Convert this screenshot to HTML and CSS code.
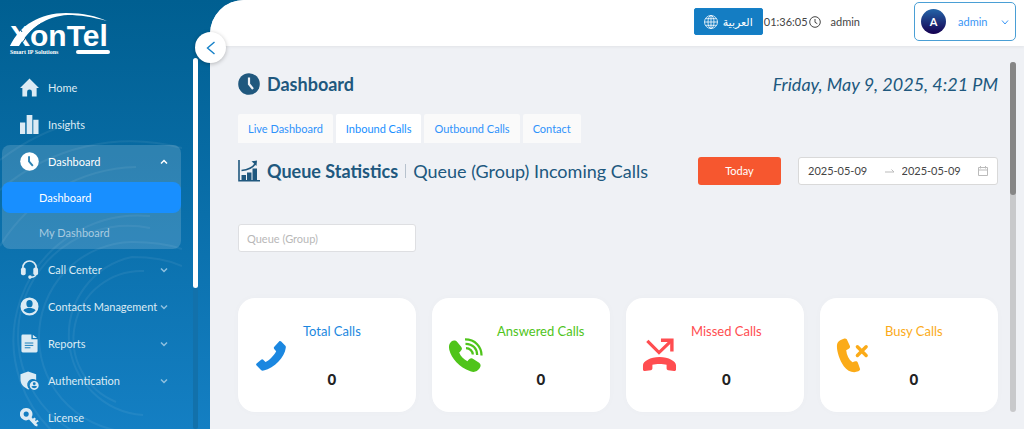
FILE: index.html
```html
<!DOCTYPE html>
<html lang="en">
<head>
<meta charset="utf-8">
<meta name="viewport" content="width=device-width, initial-scale=1">
<title>XonTel Dashboard</title>
<link rel="stylesheet" href="styles.css">
</head>
<body>
<div class="app">
  <aside class="sidebar">
    <svg class="rings" viewBox="0 0 182 429" preserveAspectRatio="xMinYMin slice" aria-hidden="true">
      <g fill="none" stroke="#fff" stroke-width="2">
        <path d="M116 402A68 68 0 0 1 144 271"/>
        <path d="M143 415A80 80 0 0 1 132 257q30 0 50 9"/>
        <path d="M136 432A95 95 0 0 1 132 242q30 0 50 7"/>
        <path d="M90 439A110 110 0 0 1 150 228"/>
        <path d="M70 445A125 125 0 0 1 150 216"/>
        <path d="M0 246A164 164 0 0 1 136 167"/><path d="M0 190A200 200 0 0 1 182 148"/><path d="M0 160A220 220 0 0 1 80 121"/>
      </g>
    </svg>
    <div class="brand">
      <svg width="104" height="46" viewBox="0 0 104 46" role="img" aria-label="XonTel Smart IP Solutions">
        <text class="brand-name" x="2" y="37">XonTel</text>
        <path d="M2 37C12 16 32 4 58 4c18 0 30 3 41 8C84 8 72 6 60 6 38 7 22 19 11 37z" fill="#fff"/>
        <path d="M12.500 37C18 27 25 19 34 14M9 15l5 8" fill="none" stroke="#016094" stroke-width="1"/>
        <text class="brand-tag" x="2" y="45">Smart IP Solutions</text>
        <rect x="68" y="41" width="34" height="4" rx="2" fill="#fff"/>
      </svg>
    </div>
    <nav class="nav">
      <a class="item" href="#"><svg viewBox="0 0 20 20"><path d="M10 0.500 20 10.500H17.500V19.500H12.500V14.500a2.500 2.500 0 0 0-5 0v5H2.500v-9H0z"/></svg><span>Home</span></a>
      <a class="item" href="#"><svg viewBox="0 0 20 20"><path d="M0 8h5.500v12H0zM7 0h6v20H7zM14 5h5.500v15H14z"/></svg><span>Insights</span></a>
      <div class="group">
        <a class="item on" href="#"><svg viewBox="0 0 20 20"><circle cx="10" cy="10" r="9.800"/><path class="cut" d="M9.500 4.500V10l4 4.500"/></svg><span>Dashboard</span><svg class="caret" viewBox="0 0 8 8"><path d="M1 5.500 4 2.500l3 3"/></svg></a>
        <a class="sub active" href="#">Dashboard</a>
        <a class="sub" href="#">My Dashboard</a>
      </div>
      <a class="item" href="#"><svg viewBox="0 0 20 20"><path d="M3 11V8a7 7 0 0 1 14 0v3" fill="none" stroke="currentColor" stroke-width="1.700"/><rect x="1" y="8" width="5" height="8" rx="2"/><rect x="14" y="8" width="5" height="8" rx="2"/><path d="M17 14c0 3-2 4.200-6 4.200" fill="none" stroke="currentColor" stroke-width="1.500"/><circle cx="10.500" cy="18" r="1.900"/></svg><span>Call Center</span><svg class="caret" viewBox="0 0 8 8"><path d="M1 2.500 4 5.500l3-3"/></svg></a>
      <a class="item" href="#"><svg viewBox="0 0 20 20"><path fill-rule="evenodd" d="M10 .5a9.500 9.500 0 1 0 0 19 9.500 9.500 0 0 0 0-19zM10 3.200a3.300 3.800 0 1 1 0 7.600 3.300 3.800 0 0 1 0-7.600zM3.500 14c2-2 4-2.300 6.500-2.300s4.500.3 6.500 2.300c-3.500 4-9.500 4-13 0z"/></svg><span>Contacts Management</span><svg class="caret" viewBox="0 0 8 8"><path d="M1 2.500 4 5.500l3-3"/></svg></a>
      <a class="item" href="#"><svg viewBox="0 0 20 20"><path d="M3 .5h9v5h6.500V18a1.500 1.500 0 0 1-1.500 1.500H3A1.500 1.500 0 0 1 1.500 18V2A1.500 1.500 0 0 1 3 .5zM13.500.8l4.500 3.500h-4.500z"/><path class="line" d="M5 9.500h9M5 12h9M5 14.500h6"/></svg><span>Reports</span><svg class="caret" viewBox="0 0 8 8"><path d="M1 2.500 4 5.500l3-3"/></svg></a>
      <a class="item" href="#"><svg viewBox="0 0 20 20"><path d="M8.500.5 17 3.500v6a5.500 5.500 0 0 0-7 9.500l-1.500.5C3 16.500.5 14 .5 8V3.500z"/><path fill-rule="evenodd" d="M15 10.500a4.700 4.700 0 1 0 0 9.400 4.700 4.700 0 0 0 0-9.400zm0 1.300a1.500 1.500 0 1 1 0 3 1.500 1.500 0 0 1 0-3zm-3 4.600c1.500-1 4.500-1 6 0-1.200 2.200-4.800 2.200-6 0z"/></svg><span>Authentication</span><svg class="caret" viewBox="0 0 8 8"><path d="M1 2.500 4 5.500l3-3"/></svg></a>
      <a class="item" href="#"><svg viewBox="0 0 20 20"><path fill-rule="evenodd" d="M6.500 0a6.500 6.500 0 1 0 3 12.200l6.200 6.600 2.300.7.700-2-1.700-1.500 1.400-1.200 1.500-.5-1.700-2-1.600 1.300-1-.9 1.300-1.200-1.700-1.500-1.700 1.200-1.300-1.400A6.500 6.500 0 0 0 6.500 0zm0 3.700a2.700 2.700 0 1 1 0 5.400 2.700 2.700 0 0 1 0-5.400z"/></svg><span>License</span></a>
    </nav>
    <div class="side-track"><div class="side-thumb"></div></div>
    <button class="collapse" aria-label="Collapse menu"><svg width="10" height="14" viewBox="0 0 10 14"><path d="M8.500 1 1.500 7l7 6"/></svg></button>
  </aside>
  <div class="main">
    <header class="topbar">
      <button class="lang"><svg width="14" height="14" viewBox="0 0 14 14"><circle cx="7" cy="7" r="6.500"/><ellipse cx="7" cy="7" rx="3" ry="6.500"/><path d="M7 .5v13M.5 7h13M1.500 3.700h11M1.500 10.300h11"/></svg><span lang="ar" dir="rtl">العربية</span></button>
      <span class="clock">01:36:05<svg width="12" height="12" viewBox="0 0 12 12"><circle cx="6" cy="6" r="5.300"/><path d="M6 3v3.300l2.300 1.400"/></svg></span>
      <span class="who">admin</span>
      <button class="user"><span class="avatar">A</span><span class="user-name">admin</span><svg width="8" height="8" viewBox="0 0 8 8"><path d="M1 2.500 4 6l3-3.500"/></svg></button>
    </header>
    <div class="body">
      <main class="content">
        <div class="title-row">
          <svg width="22" height="22" viewBox="0 0 22 22"><circle cx="11" cy="11" r="10.800" fill="#20587e"/><path d="M11 4.500V11l4 5" fill="none" stroke="#eff1f5" stroke-width="2.200"/></svg>
          <h1>Dashboard</h1>
          <time>Friday, May 9, 2025, 4:21 PM</time>
        </div>
        <nav class="tabs">
          <a href="#">Live Dashboard</a><a class="current" href="#">Inbound Calls</a><a href="#">Outbound Calls</a><a href="#">Contact</a>
        </nav>
        <div class="stats-row">
          <svg width="22" height="22" viewBox="0 0 22 22"><path d="M1 0v20.800h21M3.500 10.500c6-.5 11-2.500 14-7" fill="none" stroke="#20587e" stroke-width="1.600"/><path d="M13.500 1.300 19 .5l-.5 5.500z" fill="#20587e"/><path d="M3.500 15H8v5H3.500zM9 12.500h4.500V20H9zM14.500 8.500H19V20h-4.500z" fill="#20587e"/></svg>
          <h2>Queue Statistics</h2><i class="bar"></i><span class="subtitle">Queue (Group) Incoming Calls</span>
          <button class="today">Today</button>
          <div class="range">
            <input type="text" aria-label="Start date" value="2025-05-09">
            <svg width="10" height="8" viewBox="0 0 10 8"><path d="M0 5h9L6.500 2.500"/></svg>
            <input type="text" aria-label="End date" value="2025-05-09">
            <svg width="10" height="10" viewBox="0 0 10 10"><path d="M.5 1.500h9v8h-9zM.5 4h9M2.500 0v2.500M7.500 0v2.500"/></svg>
          </div>
        </div>
        <div class="grid filters"><input class="queue" type="text" aria-label="Queue (Group)" placeholder="Queue (Group)"></div>
        <section class="grid cards">
          <article class="card total">
            <svg viewBox="0 0 36 36"><path d="M25.800 3.500c.8-.8 1.500-.6 2.200.1l4 4c.8.8.8 1.400.7 2.500C31.500 20 21 31 10 33.500c-1.300.3-2 .1-2.800-.7l-4.500-4.500c-.7-.7-.7-1.300 0-2l4.600-4c.8-.7 1.500-.7 2.200 0l2.300 2.500C16 22.500 20.500 18 22.800 13.500l-2-2.300c-.6-.8-.6-1.400.1-2.200z"/></svg>
            <div><h3>Total Calls</h3><strong>0</strong></div>
          </article>
          <article class="card answered">
            <svg viewBox="0 0 36 36"><path d="M3.500 3.500c2-1.500 4.500-1.200 6 .5l4 5c1.500 2 1 3.300-2 6 1.500 4 4.500 7 8.500 9 2-3 4-4 6-2.500l6 4c2 1.500 2 3.700.5 5.700-2.500 3.500-5.500 4.500-9.500 3C11.500 30 3.500 21 1.300 12c-.7-3.500-.3-6.500 2.200-8.500z"/><g fill="none" stroke="currentColor" stroke-width="2.300"><path d="M17.500 1.500C28 1.500 34.500 9 34.500 18"/><path d="M18 6c7.500 0 12 5 12 11.500"/><path d="M18.500 10.500c4 0 7 3 7 6.500"/></g></svg>
            <div><h3>Answered Calls</h3><strong>0</strong></div>
          </article>
          <article class="card missed">
            <svg viewBox="0 0 36 36"><path d="M5.500 3 17.500 15 30 3" fill="none" stroke="currentColor" stroke-width="3.300"/><path d="M19.500.5H32.500V14h-3.500V4h-9.500zM1 28c0-4 7.500-8.500 17-8.500S35 24 35 28v4.500c0 1-.8 1.700-2 1.500l-6-.8c-1.200-.2-1.700-1-1.700-2V27.500c-4-1-10.600-1-14.600 0V31c0 1-.5 2-1.700 2.200L3 34c-1.200.2-2-.5-2-1.500z"/></svg>
            <div><h3>Missed Calls</h3><strong>0</strong></div>
          </article>
          <article class="card busy">
            <svg viewBox="0 0 36 36"><path d="M8 .8c2-.7 3 0 3.700 1.700l2.500 5.500c.7 1.700-.2 3-3.700 4.500.5 5 2.500 9.500 6.500 12.500 3-1.500 4.700-1.300 5.500.5l2 5.500c.6 1.700.2 2.500-1.500 3.300-5.500 2.200-11 0-15-5.300C3.500 22.500.5 13 1 7.500 1.300 3.500 4.500 1.800 8 .8z"/><path d="m22 9 9 9m0-9-9 9" fill="none" stroke="currentColor" stroke-width="3.500" stroke-linecap="round"/></svg>
            <div><h3>Busy Calls</h3><strong>0</strong></div>
          </article>
        </section>
      </main>
      <div class="track"><div class="thumb"></div></div>
    </div>
  </div>
</div>
</body>
</html>
```
FILE: styles.css
```css
* { box-sizing: border-box; }
body { margin: 0; font: 11px/16px Lato, "DejaVu Sans", sans-serif; color: #444; }
button, input { font: inherit; color: inherit; margin: 0; }
a { text-decoration: none; color: inherit; }
h1, h2, h3 { margin: 0; }

.app { display: flex; height: 100vh; overflow: hidden; background: linear-gradient(#005f91, #147fc3); }

.sidebar { position: relative; flex: 0 0 210px; padding-right: 28px; }
.rings { position: absolute; top: 0; left: 0; width: 182px; height: 100%; opacity: .06; }
.brand { height: 71px; padding: 9px 0 0 8px; }
.brand svg { display: block; }
.brand-name { font: bold 30px "Liberation Sans", Arial, sans-serif; fill: #fff; }
.brand-tag { font: bold 6px "Liberation Serif", serif; fill: #fff; }
.nav { position: relative; display: flex; flex-direction: column; gap: 4px; color: #dcebf4; }
.item { display: flex; align-items: center; height: 33px; padding: 0 14px 0 20px; }
.item > svg { width: 19px; height: 19px; margin-right: 9px; fill: currentColor; }
.item > .caret { width: 8px; height: 8px; margin: 0 0 0 auto; fill: none; stroke: #8fc0df; stroke-width: 1.5; }
.item.on { color: #fff; }
.item.on > .caret { stroke: #fff; }
.item span { white-space: nowrap; }
.cut { fill: none; stroke: #2d83b4; stroke-width: 2; }
.line { stroke: #1279b8; stroke-width: 1; }
.group { display: flex; flex-direction: column; gap: 4px; margin: 0 1px 0 2px; padding-bottom: 1px; border-radius: 8px; background: rgba(255, 255, 255, .16); }
.group .item { padding: 0 13px 0 18px; }
.sub { height: 31px; line-height: 31px; padding-left: 37px; border-radius: 8px; color: #a9cbe0; }
.sub.active { background: #188fff; color: #fff; }
.side-track { position: absolute; top: 58px; bottom: 0; right: 12px; width: 5px; background: #1271ab; border-radius: 3px; }
.side-thumb { height: 62%; border-radius: 3px; background: #fff; }
.collapse { position: absolute; z-index: 2; top: 32px; right: -16px; width: 31px; height: 31px; padding: 0; border: 0; border-radius: 50%; background: #fff; box-shadow: 0 1px 4px rgba(0, 0, 0, .25); display: grid; place-items: center; }
.collapse path { fill: none; stroke: #1580c8; stroke-width: 1.4; }

.main { flex: 1; min-width: 0; display: flex; flex-direction: column; border-top-left-radius: 34px; overflow: hidden; background: #eff1f5; }
.topbar { flex: none; display: flex; align-items: center; justify-content: flex-end; height: 46px; padding: 0 8px 3px 0; background: #fff; box-shadow: 0 1px 3px rgba(0, 0, 0, .06); }
.lang { display: flex; align-items: center; justify-content: space-between; width: 69px; height: 27px; padding: 0 9px; border: 1px solid #1580c8; border-radius: 2px; background: #147dc3; color: #fff; }
.lang svg { fill: none; stroke: #fff; stroke-width: .8; }
.clock { display: flex; align-items: center; gap: 1px; margin: 0 10px 0 1px; }
.clock svg { fill: none; stroke: #444; stroke-width: 1; }
.who { margin-right: 54px; }
.user { display: flex; align-items: center; width: 102px; height: 39px; padding: 0 6px; border: 1px solid #4a9fd5; border-radius: 5px; background: #fff; color: #3a96f5; }
.user svg { margin-left: auto; fill: none; stroke: #3a96f5; stroke-width: 1; }
.user-name { margin-left: 12px; }
.avatar { width: 25px; height: 25px; border-radius: 50%; background: linear-gradient(#2464a8, #150050); color: #fff; font-weight: bold; line-height: 25px; text-align: center; }

.body { flex: 1; display: flex; padding: 16px 8px 17px 28px; }
.content { flex: 1; min-width: 0; padding-top: 8px; }
.track { flex: 0 0 6px; margin-left: 12px; border-radius: 3px; background: #c8c9cb; }
.thumb { height: 38%; border-radius: 3px; background: #868686; }
.title-row, .stats-row { display: flex; align-items: center; height: 28px; color: #20587e; }
h1, h2 { margin-left: 7px; font-size: 18px; line-height: 28px; white-space: nowrap; }
time { margin-left: auto; font-size: 18px; font-style: italic; white-space: nowrap; }
.tabs { display: flex; gap: 3px; margin: 16px 0 14px; color: #2f92fa; }
.tabs a { padding: 0 10px; line-height: 29px; border-radius: 2px 2px 0 0; background: #fafafa; white-space: nowrap; }
.tabs .current { background: #fff; color: #188fff; }
.bar { width: 1px; height: 14px; margin: 0 7px; background: #b7c2cd; }
.subtitle { font-size: 18px; white-space: nowrap; }
.today { width: 83px; height: 28px; margin: 0 17px 0 auto; padding: 0; border: 0; border-radius: 3px; background: #f6572f; color: #fff; }
.range { display: flex; align-items: center; width: 200px; height: 28px; padding: 0 9px; border: 1px solid #d9d9d9; border-radius: 3px; background: #fff; color: #444; }
.range input { flex: 1; width: 0; min-width: 0; padding: 0; border: 0; background: none; }
.range svg { flex: none; margin-right: 7px; fill: none; stroke: #bbb; stroke-width: 1; }
.range svg:last-child { margin-right: 0; }
.grid { display: grid; grid-template-columns: repeat(4, minmax(0, 1fr)); gap: 16px; }
.filters { margin: 39px 0 46px; }
.queue { width: 100%; height: 28px; padding: 0 8px; border: 1px solid #dedfe2; border-radius: 3px; background: #fff; }
.queue::placeholder { color: #b8b8b8; opacity: 1; }
.card { display: flex; gap: 14px; padding: 23px 16px; border-radius: 17px; background: #fff; box-shadow: 0 0 8px rgba(0, 0, 0, .02); }
.card > svg { flex: none; width: 35px; height: 35px; margin-top: 17px; fill: currentColor; }
.card > div { text-align: center; }
.card h3 { font-size: 13px; font-weight: 400; line-height: 20px; white-space: nowrap; }
.card strong { display: block; margin-top: 28px; color: #222; font-size: 15px; font-weight: 900; line-height: 20px; }
.total { color: #1b87e0; }
.answered { color: #4fc41a; }
.missed { color: #ff4d50; }
.busy { color: #fbab18; }
```
